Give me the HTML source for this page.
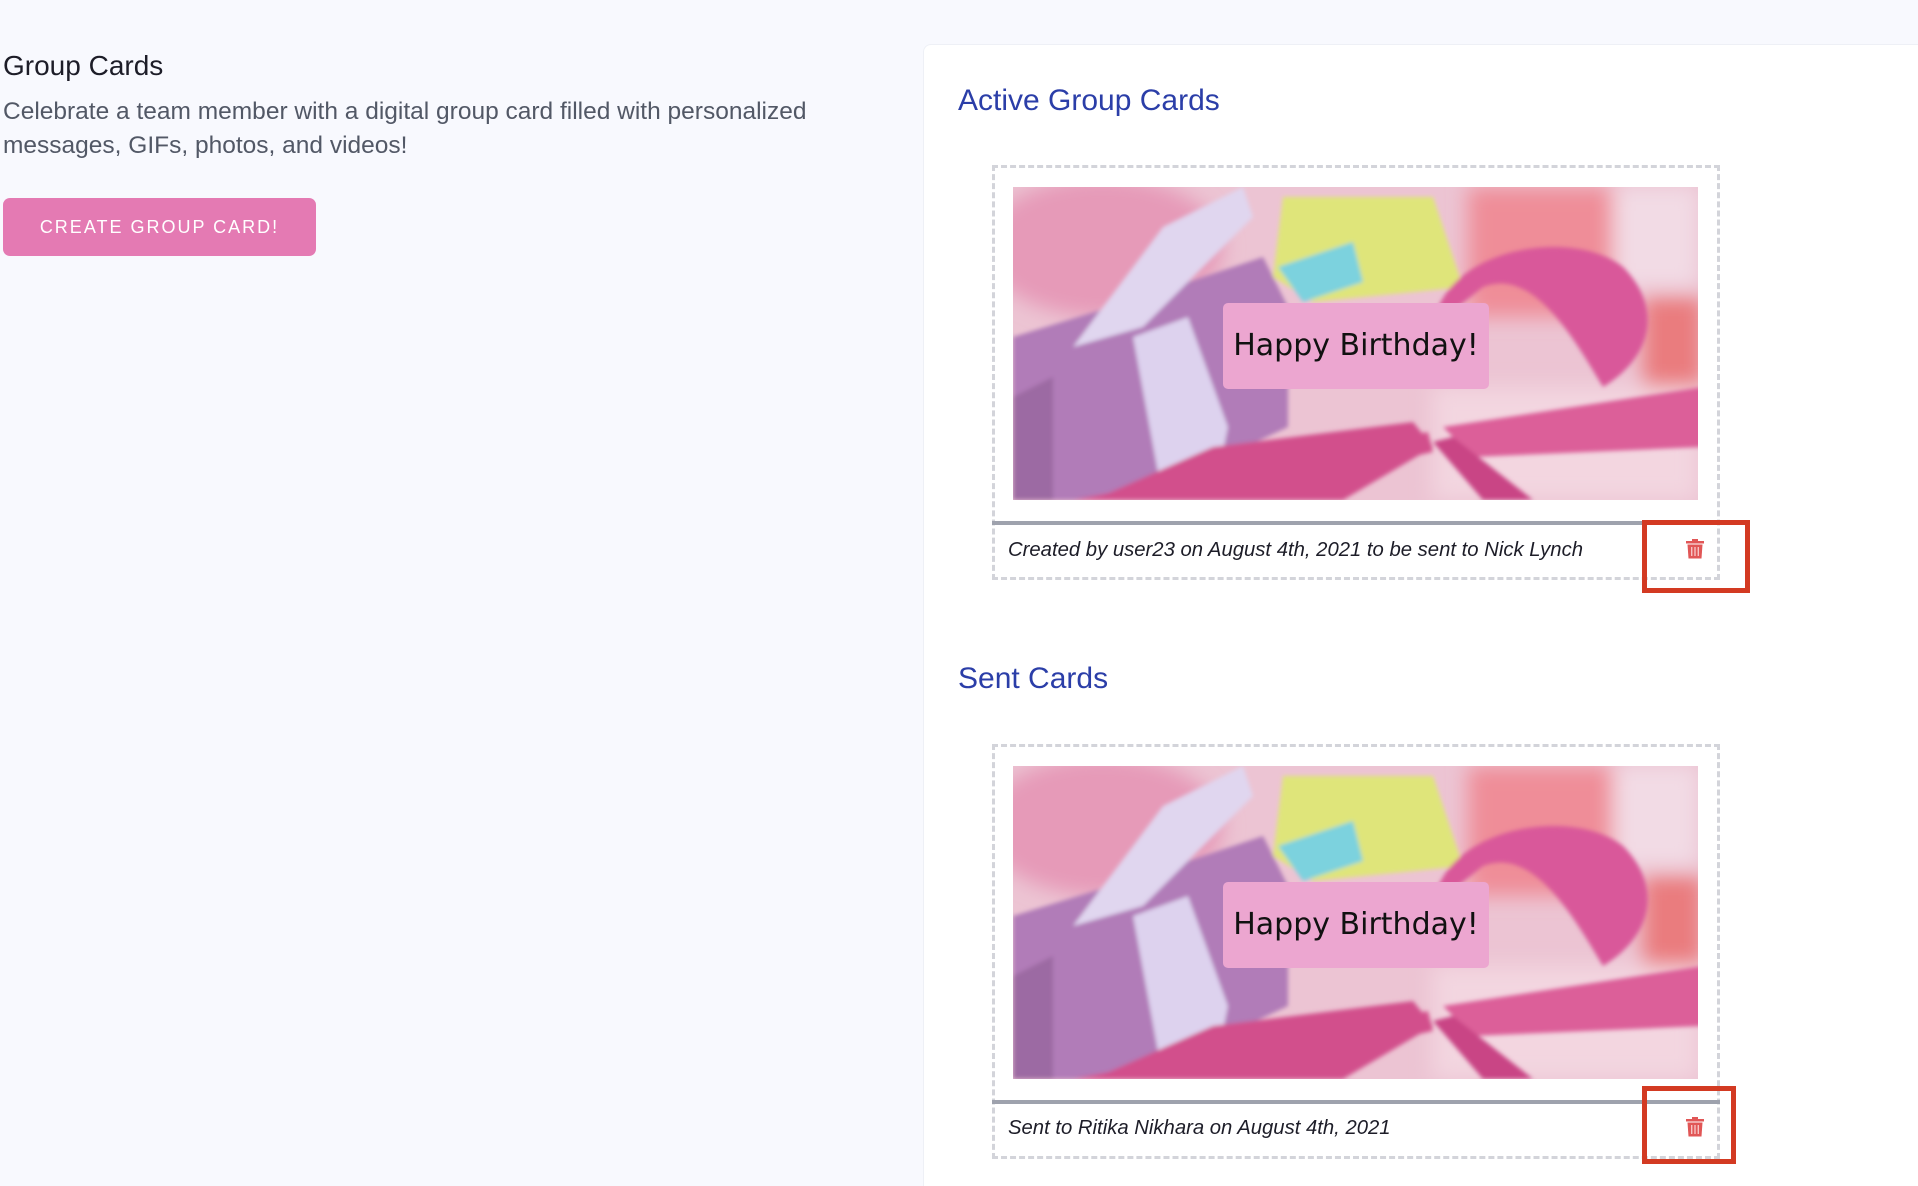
<!DOCTYPE html>
<html><head><meta charset="utf-8"><style>
*{margin:0;padding:0;box-sizing:border-box}
html,body{width:1918px;height:1186px;overflow:hidden;background:#f8f9fe;font-family:"Liberation Sans","DejaVu Sans",sans-serif;position:relative}
.h1{position:absolute;left:3px;top:50px;font-size:28px;color:#1d1d28}
.desc{position:absolute;left:3px;top:95px;width:880px;font-size:24.5px;line-height:34px;color:#525866}
.btn{position:absolute;left:3px;top:198px;width:313px;height:58px;background:#e47ab3;border-radius:7px;color:#fff;font-size:18px;letter-spacing:2px;text-align:center;line-height:58px}
.panel{position:absolute;left:923px;top:44px;width:995px;height:1142px;background:#fff;border-radius:8px 0 0 0;border:1px solid #eef0f6;border-right:none;border-bottom:none}
.t{position:absolute;left:958px;font-size:30px;color:#2b3ea8}
.card{position:absolute;left:992px;width:728px;border:3px dashed #d3d4da}
.img{position:absolute;left:1013px;width:685px;height:313px;overflow:hidden}
.bar{position:absolute;left:992px;width:728px;height:4px;background:#9ea2ad}
.cap{position:absolute;left:1008px;font-size:20.3px;font-style:italic;color:#1d1d28}
.red{position:absolute;left:1642px;width:108px;border:5px solid #d33a22}
.trash{position:absolute;left:1686px}
.lbl{position:absolute;left:210px;top:116px;width:266px;height:86px;background:#eca6d0;border-radius:5px;text-align:center;line-height:86px;font-size:30px;color:#111;font-family:"DejaVu Sans",sans-serif}
</style></head><body>
<div class="h1">Group Cards</div>
<div class="desc">Celebrate a team member with a digital group card filled with personalized messages, GIFs, photos, and videos!</div>
<div class="btn">CREATE GROUP CARD!</div>
<div class="panel"></div>
<div class="t" style="top:84px">Active Group Cards</div>
<div class="t" style="top:662px">Sent Cards</div>

<div class="card" style="top:165px;height:415px"></div>
<div class="card" style="top:744px;height:415px"></div>

<svg width="0" height="0" style="position:absolute"><defs>
<filter id="b"><feGaussianBlur stdDeviation="10"/></filter>
<filter id="s"><feGaussianBlur stdDeviation="2"/></filter>
<g id="pic">
<rect width="685" height="313" fill="#ecc4d3"/>
<g filter="url(#b)">
<ellipse cx="90" cy="60" rx="120" ry="70" fill="#e69ab8"/>
<rect x="455" y="0" width="150" height="130" fill="#ef8d98"/>
<rect x="630" y="110" width="60" height="90" fill="#ea7b7e"/>
<rect x="600" y="0" width="85" height="100" fill="#f2dbe5"/>
<rect x="420" y="200" width="265" height="113" fill="#f3d6e0"/>
</g>
<g filter="url(#s)">
<polygon points="270,10 420,10 450,100 300,115 260,90" fill="#dfe57a"/>
<polygon points="265,80 340,55 350,95 290,115" fill="#7cd2de"/>
<polygon points="0,150 130,110 250,70 275,120 275,240 120,313 0,313" fill="#b17cb8"/>
<polygon points="0,210 40,190 40,313 0,313" fill="#9c6aa3"/>
<polygon points="120,150 175,130 215,240 200,313 150,313" fill="#ddd2ee"/>
<polygon points="150,40 230,0 240,30 130,140 60,160" fill="#e0d6ef"/>
<path d="M420,140 C430,60 560,40 610,80 C650,120 640,170 590,200 C560,150 520,80 470,100 Z" fill="#d9589a"/>
<polygon points="415,245 60,313 200,313 420,265" fill="#d6548f"/>
<polygon points="400,235 200,260 80,313 330,313 420,260" fill="#d24f8c"/>
<polygon points="430,240 690,200 690,260 460,270" fill="#dc5e99"/>
<polygon points="420,255 470,313 520,313 440,250" fill="#c94585"/>
</g>
</g></defs></svg>

<div class="img" style="top:187px"><svg width="685" height="313"><use href="#pic"/></svg><div class="lbl">Happy Birthday!</div></div>
<div class="img" style="top:766px"><svg width="685" height="313"><use href="#pic"/></svg><div class="lbl">Happy Birthday!</div></div>

<div class="bar" style="top:521px"></div>
<div class="bar" style="top:1100px"></div>
<div class="cap" style="top:539px">Created by user23 on August 4th, 2021 to be sent to Nick Lynch</div>
<div class="cap" style="top:1117px">Sent to Ritika Nikhara on August 4th, 2021</div>

<div class="red" style="top:520px;height:73px"></div>
<div class="red" style="top:1086px;height:78px;width:94px"></div>

<svg class="trash" style="top:539px" width="18" height="20" viewBox="0 0 18 20"><rect x="6" y="0" width="6" height="2" fill="#e15656"/><rect x="0" y="2" width="18" height="2.5" fill="#e15656"/><path d="M1.5 5.5h15l-1 14h-13z" fill="#e15656"/><rect x="5" y="8" width="1.4" height="9" fill="#f7c4c4"/><rect x="8.3" y="8" width="1.4" height="9" fill="#f7c4c4"/><rect x="11.6" y="8" width="1.4" height="9" fill="#f7c4c4"/></svg>
<svg class="trash" style="top:1117px" width="18" height="20" viewBox="0 0 18 20"><rect x="6" y="0" width="6" height="2" fill="#e15656"/><rect x="0" y="2" width="18" height="2.5" fill="#e15656"/><path d="M1.5 5.5h15l-1 14h-13z" fill="#e15656"/><rect x="5" y="8" width="1.4" height="9" fill="#f7c4c4"/><rect x="8.3" y="8" width="1.4" height="9" fill="#f7c4c4"/><rect x="11.6" y="8" width="1.4" height="9" fill="#f7c4c4"/></svg>
</body></html>
